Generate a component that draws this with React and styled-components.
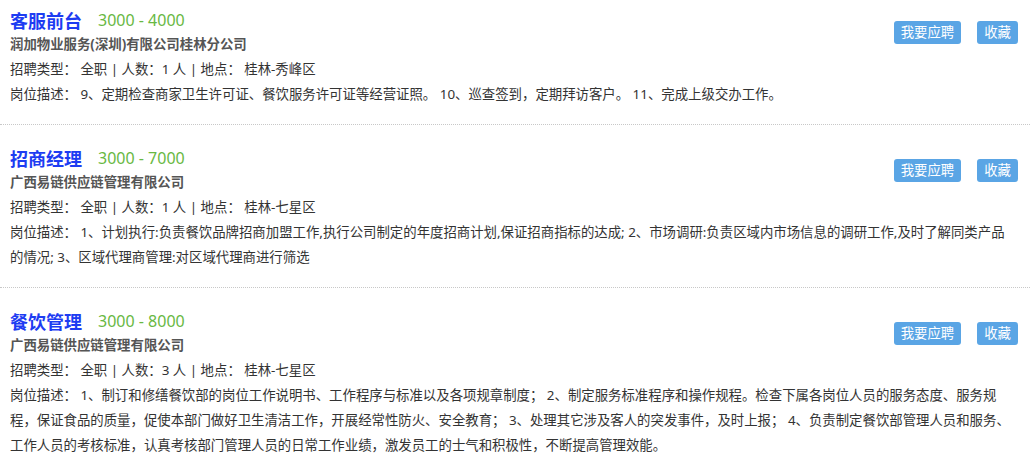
import React from "react";
import styled, { createGlobalStyle } from "styled-components";

const jobs = [
  {
    title: "客服前台",
    salary: "3000 - 4000",
    company: "润加物业服务(深圳)有限公司桂林分公司",
    type: "全职",
    count: 1,
    place: "桂林-秀峰区",
    desc: "9、定期检查商家卫生许可证、餐饮服务许可证等经营证照。 10、巡查签到，定期拜访客户。 11、完成上级交办工作。",
  },
  {
    title: "招商经理",
    salary: "3000 - 7000",
    company: "广西易链供应链管理有限公司",
    type: "全职",
    count: 1,
    place: "桂林-七星区",
    desc: "1、计划执行:负责餐饮品牌招商加盟工作,执行公司制定的年度招商计划,保证招商指标的达成; 2、市场调研:负责区域内市场信息的调研工作,及时了解同类产品的情况; 3、区域代理商管理:对区域代理商进行筛选",
  },
  {
    title: "餐饮管理",
    salary: "3000 - 8000",
    company: "广西易链供应链管理有限公司",
    type: "全职",
    count: 3,
    place: "桂林-七星区",
    desc: "1、制订和修缮餐饮部的岗位工作说明书、工作程序与标准以及各项规章制度； 2、制定服务标准程序和操作规程。检查下属各岗位人员的服务态度、服务规程，保证食品的质量，促使本部门做好卫生清洁工作，开展经常性防火、安全教育； 3、处理其它涉及客人的突发事件，及时上报； 4、负责制定餐饮部管理人员和服务、工作人员的考核标准，认真考核部门管理人员的日常工作业绩，激发员工的士气和积极性，不断提高管理效能。",
  },
];

const App = () => {
  return (
    <>
      <GlobalStyle />
      <List>
        {jobs.map((job) => (
          <Card key={job.title}>
            <Top>
              <Info>
                <TitleRow>
                  <Title>{job.title}</Title>
                  <Salary>{job.salary}</Salary>
                </TitleRow>
                <Company>{job.company}</Company>
                <Line>
                  {`招聘类型： ${job.type} | 人数：${job.count} 人 | 地点： ${job.place}`}
                </Line>
              </Info>
              <Actions>
                <Button>我要应聘</Button>
                <Button>收藏</Button>
              </Actions>
            </Top>
            <Line>{`岗位描述： ${job.desc}`}</Line>
          </Card>
        ))}
      </List>
    </>
  );
};

export default App;

const GlobalStyle = createGlobalStyle`
  body {
    margin: 0;
    background: #fff;
    font-family: "Microsoft YaHei", "Noto Sans", "Noto Sans CJK SC", sans-serif;
    color: #333;
  }
`;

// the screenshot starts a little below the top of the first card
const List = styled.div`
  margin-top: -13px;
`;

const Card = styled.div`
  padding: 20px 14px 17px 10px;
  border-bottom: 1px dotted #c8c8c8;
`;

const Top = styled.div`
  display: flex;
  justify-content: space-between;
`;

const Info = styled.div`
  display: flex;
  flex-direction: column;
`;

const TitleRow = styled.div`
  display: flex;
  align-items: center;
  height: 25px;
  gap: 16px;
`;

const Title = styled.span`
  font-size: 18px;
  font-weight: bold;
  color: #1d3cf2;
`;

const Salary = styled.span`
  font-size: 16px;
  color: #68b843;
`;

const Company = styled.div`
  font-size: 13.4px;
  font-weight: bold;
  line-height: 25px;
  color: #555;
`;

const Line = styled.div`
  font-size: 13.4px;
  line-height: 25px;
  color: #333;
`;

const Actions = styled.div`
  display: flex;
  gap: 16px;
  align-items: flex-start;
  margin-top: 14px;
  margin-right: -2px;
`;

const Button = styled.button`
  height: 23px;
  padding: 0 7px;
  border: none;
  border-radius: 3px;
  background-color: #5aa5e5;
  color: #fff;
  font-family: inherit;
  font-size: 13.4px;
  line-height: 23px;
  cursor: pointer;
`;
